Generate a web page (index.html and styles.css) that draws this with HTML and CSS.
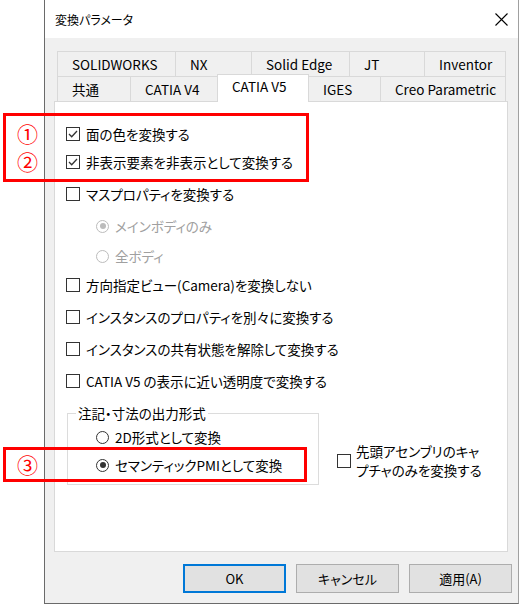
FILE: index.html
```html
<!DOCTYPE html>
<html lang="ja">
<head>
    <meta charset="UTF-8">
    <meta name="viewport" content="width=device-width, initial-scale=1.0">
    <title>変換パラメータ</title>
    <link rel="stylesheet" href="styles.css">
</head>
<body>
    <div class="dlg">
        <div class="dlg_ttl">
            <span class="ttl_txt">変換パラメータ</span>
            <svg class="ico_close" width="13" height="13" viewBox="0 0 13 13">
                <path d="M0.5 0.5 L12.5 12.5 M12.5 0.5 L0.5 12.5" stroke="#000" stroke-width="1.1" fill="none"/>
            </svg>
        </div>

        <!-- 탭 -->
        <div class="tab_wrap">
            <ul class="tab_row">
                <li class="w118">SOLIDWORKS</li>
                <li class="w76">NX</li>
                <li class="w98">Solid Edge</li>
                <li class="w75">JT</li>
                <li class="w82 last">Inventor</li>
            </ul>
            <ul class="tab_row">
                <li class="w73">共通</li>
                <li class="w87">CATIA V4</li>
                <li class="w92 is_on">CATIA V5</li>
                <li class="w72">IGES</li>
                <li class="w126 last">Creo Parametric</li>
            </ul>
        </div>

        <div class="tab_con">
            <div class="opt">
                <span class="chk"><svg width="12" height="12" viewBox="0 0 12 12"><path d="M2 6 L4.7 8.7 L10 3" stroke="#333" stroke-width="1.3" fill="none"/></svg></span>
                面の色を変換する
            </div>
            <div class="opt mt0">
                <span class="chk"><svg width="12" height="12" viewBox="0 0 12 12"><path d="M2 6 L4.7 8.7 L10 3" stroke="#333" stroke-width="1.3" fill="none"/></svg></span>
                非表示要素を非表示として変換する
            </div>
            <div class="opt"><span class="chk"></span>マスプロパティを変換する</div>
            <div class="opt sub is_dis"><span class="rdo"><i class="dot"></i></span>メインボディのみ</div>
            <div class="opt sub is_dis mt2"><span class="rdo"></span>全ボディ</div>
            <div class="opt mt1"><span class="chk"></span>方向指定ビュー(Camera)を変換しない</div>
            <div class="opt"><span class="chk"></span>インスタンスのプロパティを別々に変換する</div>
            <div class="opt"><span class="chk"></span>インスタンスの共有状態を解除して変換する</div>
            <div class="opt"><span class="chk"></span>CATIA V5 の表示に近い透明度で変換する</div>

            <div class="grp_row">
                <fieldset class="grp">
                    <legend>注記・寸法の出力形式</legend>
                    <div class="opt sub first"><span class="rdo"></span>2D形式として変換</div>
                    <div class="opt sub mt0"><span class="rdo"><i class="dot"></i></span>セマンティックPMIとして変換</div>
                </fieldset>
                <div class="opt_multi">
                    <span class="chk"></span>
                    <span>先頭アセンブリのキャ<br>プチャのみを変換する</span>
                </div>
            </div>
        </div>

        <div class="btns">
            <button class="btn btn_ok">OK</button>
            <button class="btn">キャンセル</button>
            <button class="btn">適用(A)</button>
        </div>
    </div>

    <!-- 빨간 표시 -->
    <div class="mark mark1"></div>
    <div class="mark mark3"></div>
    <span class="num num1">①</span>
    <span class="num num2">②</span>
    <span class="num num3">③</span>
</body>
</html>
```

FILE: styles.css
```css
/* 초기화 */
body,ul{margin: 0; padding: 0;}
ul{list-style: none;}
fieldset{margin: 0; padding: 0; border: 0; min-width: 0;}
body{
    background-color: #fff; color: #000;
    font-family: "Noto Sans CJK JP", "Noto Sans", sans-serif; font-size: 13px;
}

/* 창 */
.dlg{
    width: 475px; height: 604px; margin-left: 44px;
    box-sizing: border-box;
    border-left: 1px solid #6a6a6a; border-right: 1px solid #a0a0a0; border-bottom: 1px solid #6a6a6a;
    background-color: #f0f0f0;
    display: flex; flex-direction: column;
}
.dlg_ttl{
    height: 38px; flex: none; background-color: #fff;
    display: flex; align-items: center; justify-content: space-between;
    padding: 0 10px;
}
.dlg_ttl .ttl_txt{font-size: 12px; font-feature-settings: "palt";}

/* 탭 */
.tab_wrap{margin: 13px 0 0 12px; flex: none;}
.tab_row{display: flex; align-items: flex-start;}
.tab_row li{
    height: 25px; box-sizing: border-box;
    border-top: 1px solid #d9d9d9; border-left: 1px solid #d9d9d9;
    padding-left: 14px; line-height: 24px; white-space: nowrap;
    font-size: 13.5px;
}
.tab_row li.last{border-right: 1px solid #d9d9d9;}
.tab_row li.is_on{
    height: 28px; line-height: 22px;
    margin: -2px -1px -1px 0;
    border-right: 1px solid #d9d9d9;
    background-color: #fff;
    position: relative; z-index: 1;
}
.w118{width: 118px;}
.w76{width: 76px;}
.w98{width: 98px;}
.w75{width: 75px;}
.w82{width: 82px;}
.w73{width: 73px;}
.w87{width: 87px;}
.w92{width: 92px;}
.w72{width: 72px;}
.w126{width: 126px;}

/* 탭 내용 */
.tab_con{
    flex: none; height: 451px; box-sizing: border-box;
    margin: 0 10px 0 9px; padding: 18px 0 0 11px;
    border: 1px solid #d9d9d9; background-color: #fff;
    font-size: 13.5px; font-feature-settings: "palt";
}
.opt{display: flex; align-items: center; height: 28px; white-space: nowrap;}
.opt + .opt{margin-top: 4px;}
.opt.mt0{margin-top: 0;}
.opt.mt1{margin-top: 1px;}
.opt.mt2{margin-top: 2px;}
.opt.sub{margin-left: 30px;}
.opt.is_dis{color: #a0a0a0;}

.chk{
    width: 14px; height: 14px; box-sizing: border-box; flex: none;
    border: 1px solid #333; background-color: #fff;
    display: flex; align-items: center; justify-content: center;
    margin-right: 6px;
}
.rdo{
    width: 13px; height: 13px; box-sizing: border-box; flex: none;
    border: 1px solid #333; border-radius: 50%; background-color: #fff;
    display: flex; align-items: center; justify-content: center;
    margin-right: 6px;
}
.rdo .dot{width: 6px; height: 6px; border-radius: 50%; background-color: #333;}
.is_dis .rdo{border-color: #bcbcbc;}
.is_dis .rdo .dot{background-color: #bcbcbc;}

/* 그룹 */
.grp_row{display: flex; align-items: flex-start; margin-top: 9px;}
.grp{
    width: 252px; box-sizing: border-box; margin-left: 1px;
    border: 1px solid #dcdcdc; padding: 0 0 5px 0;
}
.grp legend{margin-left: 8px; padding: 0 2px; line-height: 18px;}
.grp .opt.sub{margin-left: 28px;}
.grp .opt.first{margin-top: 1px;}
.opt_multi{
    display: flex; align-items: center;
    margin: 38px 0 0 18px; line-height: 19px;
}
.opt_multi .chk{margin-right: 5px;}

/* 버튼 */
.btns{
    display: flex; justify-content: flex-end; gap: 10px;
    margin: 12px 6px 0 0;
}
.btn{
    width: 103px; height: 29px; box-sizing: border-box;
    border: 1px solid #adadad; background-color: #e1e1e1;
    font-family: inherit; font-size: 13px; color: #000;
    font-feature-settings: "palt"; padding: 0;
}
.btn_ok{border: 2px solid #0078d7;}

/* 빨간 표시 */
.mark{position: absolute; border: 3px solid #ff0000; box-sizing: border-box;}
.mark1{left: 3px; top: 113px; width: 306px; height: 69px;}
.mark3{left: 3px; top: 447px; width: 304px; height: 35px;}
.num{position: absolute; color: #ff0000; font-size: 21px; line-height: 21px;}
.num1{left: 17px; top: 123px;}
.num2{left: 17px; top: 151px;}
.num3{left: 17px; top: 454px;}
```
